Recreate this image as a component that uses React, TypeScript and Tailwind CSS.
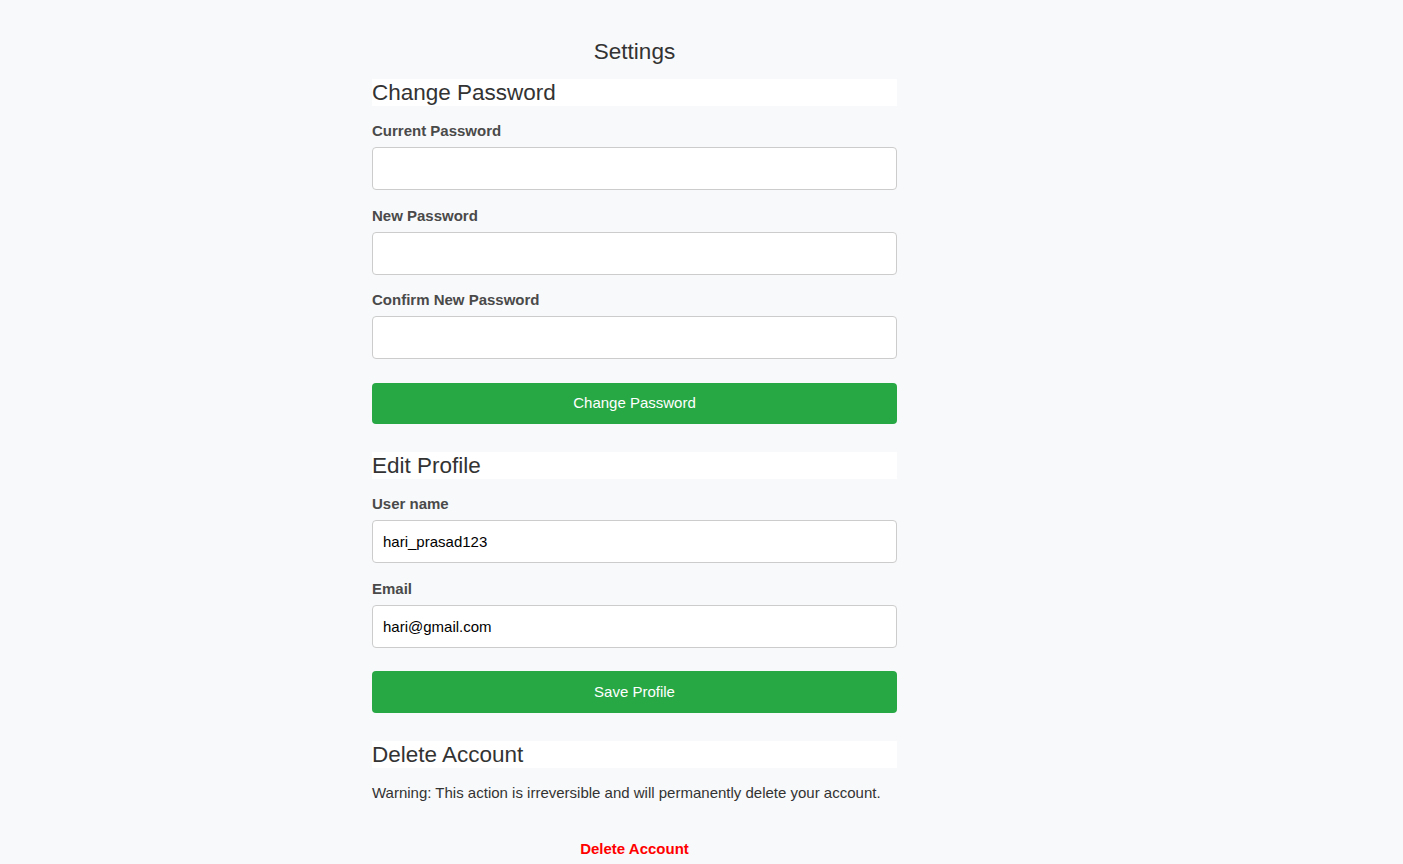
import { useState } from 'react';

function Field({ label, type = 'text', value, onChange }: { label: string; type?: string; value: string; onChange: (v: string) => void }) {
  return (
    <div className="mb-[14.5px]">
      <label className="block text-[15px] leading-[22.5px] font-bold text-[#4a4a4a] mb-[4.5px]">{label}</label>
      <input
        type={type}
        value={value}
        onChange={(e) => onChange(e.target.value)}
        className="block w-full h-[43px] px-[10px] bg-white border border-[#cccccc] rounded-[4px] text-[15px] text-black outline-none"
      />
    </div>
  );
}

export default function App() {
  const [current, setCurrent] = useState('');
  const [next, setNext] = useState('');
  const [confirm, setConfirm] = useState('');
  const [username, setUsername] = useState('hari_prasad123');
  const [email, setEmail] = useState('hari@gmail.com');

  return (
    <div className="min-h-screen bg-[#f8f9fa] font-['Liberation_Sans',Arial,sans-serif] text-[#333]">
      <div className="ml-[372px] w-[525px] pt-[38px]">
        <h1 className="text-center text-[22.5px] leading-[27px] text-[#333] mb-[14px]">Settings</h1>

        {/* Change Password */}
        <h2 className="bg-white text-[22.5px] leading-[27px] text-[#333] mb-[14px]">Change Password</h2>
        <Field label="Current Password" type="password" value={current} onChange={setCurrent} />
        <Field label="New Password" type="password" value={next} onChange={setNext} />
        <Field label="Confirm New Password" type="password" value={confirm} onChange={setConfirm} />
        <button className="mt-[9.5px] w-full h-[41px] bg-[#28a745] text-white text-[15px] rounded-[4px]">
          Change Password
        </button>

        {/* Edit Profile */}
        <h2 className="mt-[28px] bg-white text-[22.5px] leading-[27px] text-[#333] mb-[14px]">Edit Profile</h2>
        <Field label="User name" value={username} onChange={setUsername} />
        <Field label="Email" value={email} onChange={setEmail} />
        <button className="mt-[9px] w-full h-[42px] bg-[#28a745] text-white text-[15px] rounded-[4px]">
          Save Profile
        </button>

        {/* Delete Account */}
        <h2 className="mt-[28px] bg-white text-[22.5px] leading-[27px] text-[#333] mb-[14px]">Delete Account</h2>
        <p className="text-[15px] leading-[22.5px] text-[#333]">
          Warning: This action is irreversible and will permanently delete your account.
        </p>
        <div className="mt-[32px] text-center">
          <button className="text-[15px] leading-[22.5px] font-bold text-[#ff0000]">Delete Account</button>
        </div>
      </div>
    </div>
  );
}
